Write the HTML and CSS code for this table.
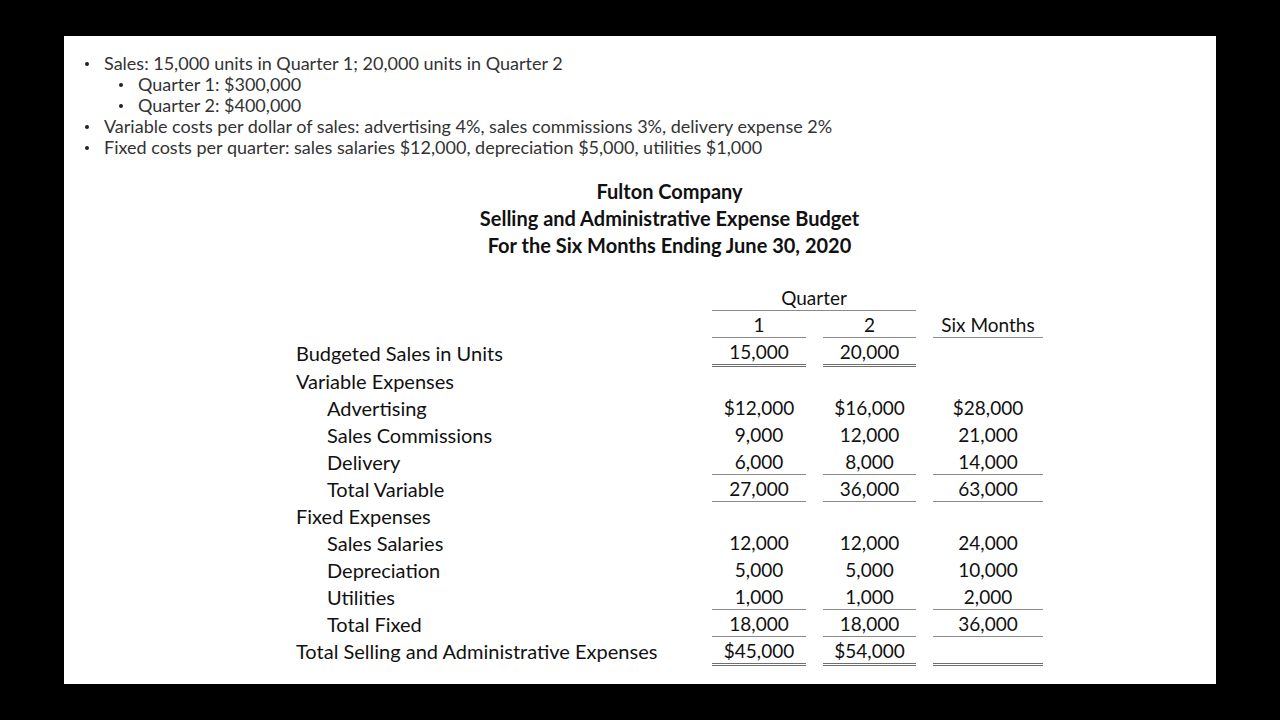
FILE: index.html
```html
<!DOCTYPE html>
<html>
<head>
<meta charset="utf-8">
<link rel="stylesheet" href="styles.css">
</head>
<body>
<div class="slide">
  <ul class="facts">
    <li>Sales: 15,000 units in Quarter 1; 20,000 units in Quarter 2
      <ul class="sub">
        <li>Quarter 1: $300,000</li>
        <li>Quarter 2: $400,000</li>
      </ul>
    </li>
    <li>Variable costs per dollar of sales: advertising 4%, sales commissions 3%, delivery expense 2%</li>
    <li>Fixed costs per quarter: sales salaries $12,000, depreciation $5,000, utilities $1,000</li>
  </ul>

  <div class="budget">
    <div class="title">
      <div>Fulton Company</div>
      <div>Selling and Administrative Expense Budget</div>
      <div>For the Six Months Ending June 30, 2020</div>
    </div>

    <div class="grid">
      <div class="lbl"></div>
      <div class="num quarter">Quarter</div>
      <div class="num"></div>

      <div class="lbl"></div>
      <div class="num line">1</div>
      <div class="num line">2</div>
      <div class="num line">Six Months</div>

      <div class="lbl">Budgeted Sales in Units</div>
      <div class="num dbl">15,000</div>
      <div class="num dbl">20,000</div>
      <div class="num"></div>

      <div class="lbl">Variable Expenses</div>
      <div class="num"></div>
      <div class="num"></div>
      <div class="num"></div>

      <div class="lbl ind">Advertising</div>
      <div class="num">$12,000</div>
      <div class="num">$16,000</div>
      <div class="num">$28,000</div>

      <div class="lbl ind">Sales Commissions</div>
      <div class="num">9,000</div>
      <div class="num">12,000</div>
      <div class="num">21,000</div>

      <div class="lbl ind">Delivery</div>
      <div class="num line">6,000</div>
      <div class="num line">8,000</div>
      <div class="num line">14,000</div>

      <div class="lbl ind">Total Variable</div>
      <div class="num line">27,000</div>
      <div class="num line">36,000</div>
      <div class="num line">63,000</div>

      <div class="lbl">Fixed Expenses</div>
      <div class="num"></div>
      <div class="num"></div>
      <div class="num"></div>

      <div class="lbl ind">Sales Salaries</div>
      <div class="num">12,000</div>
      <div class="num">12,000</div>
      <div class="num">24,000</div>

      <div class="lbl ind">Depreciation</div>
      <div class="num">5,000</div>
      <div class="num">5,000</div>
      <div class="num">10,000</div>

      <div class="lbl ind">Utilities</div>
      <div class="num line">1,000</div>
      <div class="num line">1,000</div>
      <div class="num line">2,000</div>

      <div class="lbl ind">Total Fixed</div>
      <div class="num line">18,000</div>
      <div class="num line">18,000</div>
      <div class="num line">36,000</div>

      <div class="lbl">Total Selling and Administrative Expenses</div>
      <div class="num dbl last">$45,000</div>
      <div class="num dbl last">$54,000</div>
      <div class="num dbl last"></div>
    </div>
  </div>
</div>
</body>
</html>
```

FILE: styles.css
```css
html, body {
  margin: 0;
  padding: 0;
  background: #000;
  width: 1280px;
  height: 720px;
  overflow: hidden;
}

.slide {
  position: relative;
  margin: 36px 0 0 64px;
  width: 1152px;
  height: 648px;
  background: #fff;
  box-sizing: border-box;
  padding-top: 17px;
}

.facts {
  margin: 0;
  padding: 0 0 0 40px;
  list-style: none;
  font-family: "Lato", "Noto Sans", sans-serif;
  font-size: 18px;
  line-height: 21px;
  color: #333;
}

.facts li {
  position: relative;
}

.facts li::before {
  content: "";
  position: absolute;
  left: -19px;
  top: 9px;
  width: 4px;
  height: 4px;
  border-radius: 50%;
  background: #222;
}

.facts .sub {
  margin: 0;
  padding: 0 0 0 34px;
  list-style: none;
}

.budget {
  margin-left: 232px;
  width: 747px;
  margin-top: 20px;
  font-family: "Lato", "Open Sans", sans-serif;
  color: #111;
}

.title {
  text-align: center;
  font-weight: 700;
  font-size: 20px;
  line-height: 27px;
}

.grid {
  margin-top: 25px;
  display: grid;
  grid-template-columns: 399px 94px 93px 110px;
  grid-template-rows: 27px 27px 29px;
  grid-auto-rows: 27px;
  column-gap: 17px;
  font-size: 20px;
}

.lbl {
  display: flex;
  align-items: center;
  white-space: nowrap;
  padding-top: 1px;
}

.lbl.ind {
  padding-left: 31px;
}

.num {
  display: flex;
  align-items: center;
  justify-content: center;
  white-space: nowrap;
  font-size: 19px;
}

.quarter {
  grid-column: span 2;
  border-bottom: 1px solid #8a8a8a;
}

.line {
  border-bottom: 1px solid #8a8a8a;
}

.dbl {
  border-bottom: 3px double #6f6f6f;
}

.dbl.last {
  margin-bottom: -2px;
}
```
